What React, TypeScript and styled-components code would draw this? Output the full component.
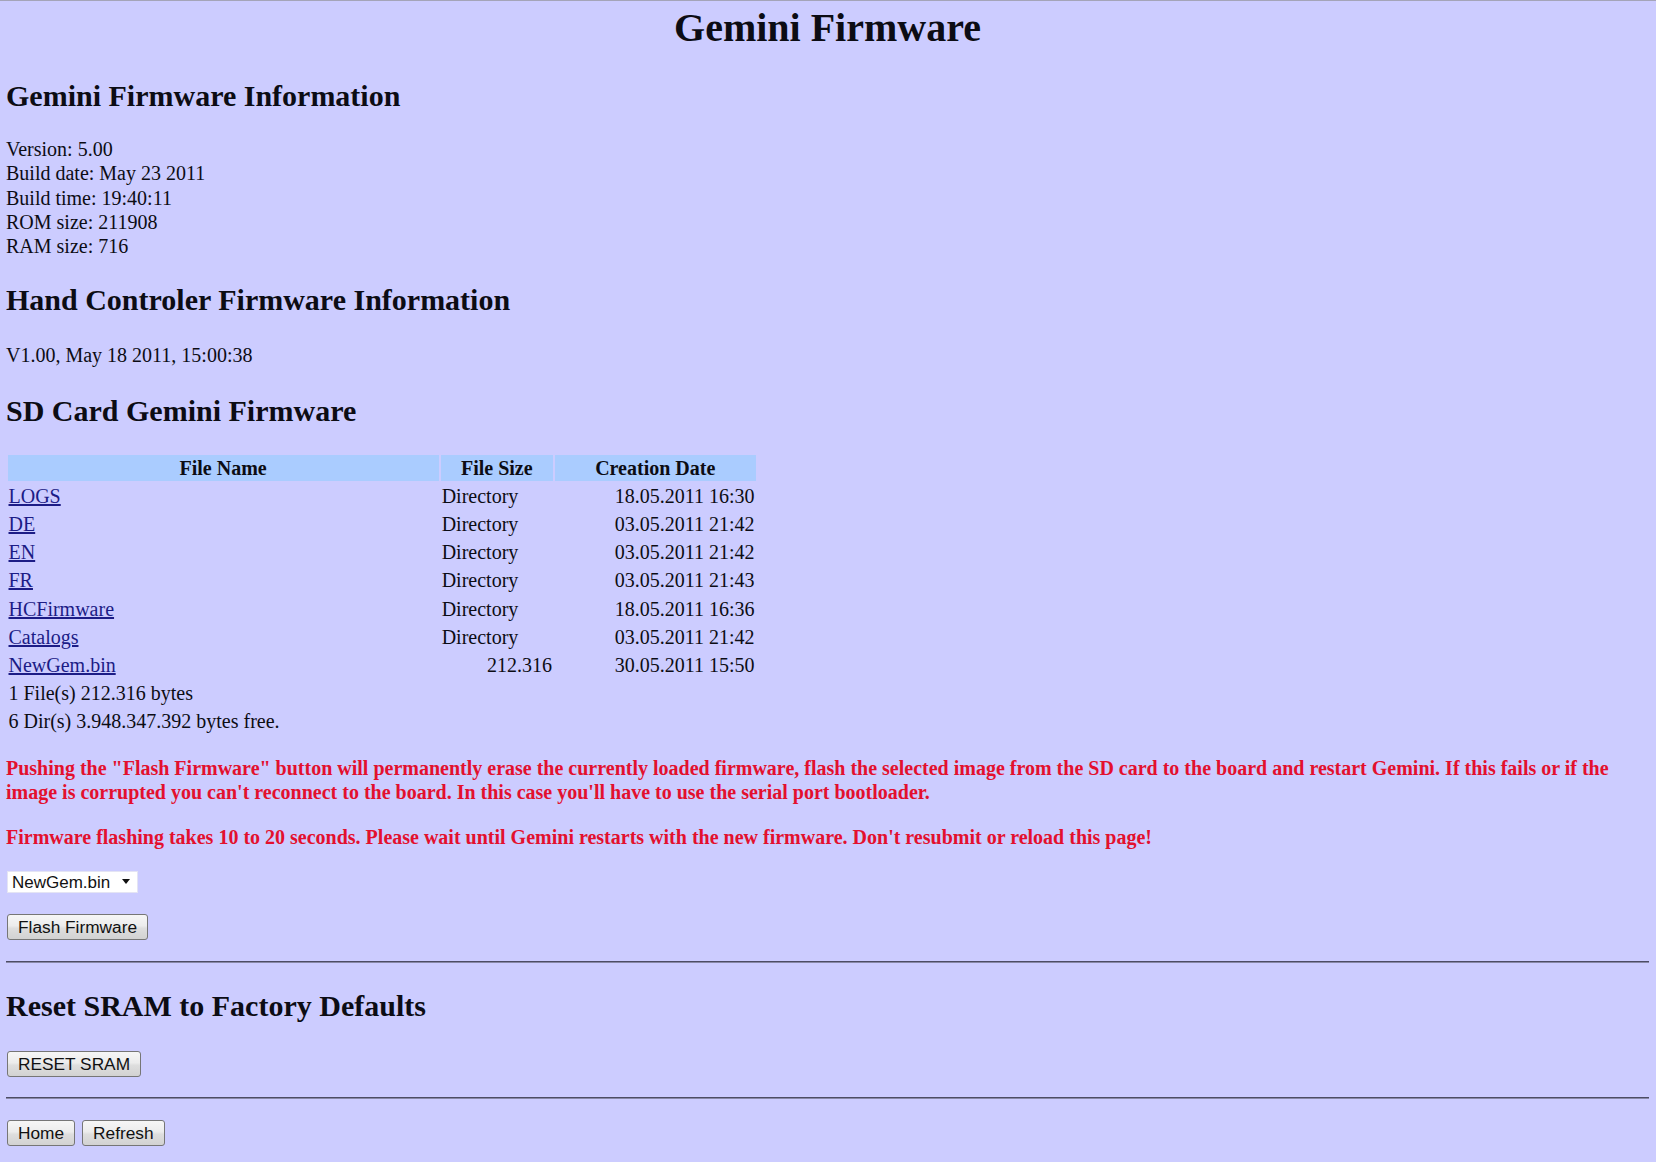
import React from 'react'
import styled, { createGlobalStyle } from 'styled-components'

const GlobalStyle = createGlobalStyle`
  html, body {
    margin: 0;
    padding: 0;
    background: #ccccff;
  }

  body {
    border-top: 1px solid #a4a4b8;
    font-family: "Liberation Serif", "Times New Roman", serif;
    font-size: 20px;
    color: #0c0c14;
  }
`

interface FileRow {
  name: string
  size: string
  date: string
  isDir?: boolean
}

const files: FileRow[] = [
  { name: 'LOGS', size: 'Directory', date: '18.05.2011 16:30', isDir: true },
  { name: 'DE', size: 'Directory', date: '03.05.2011 21:42', isDir: true },
  { name: 'EN', size: 'Directory', date: '03.05.2011 21:42', isDir: true },
  { name: 'FR', size: 'Directory', date: '03.05.2011 21:43', isDir: true },
  { name: 'HCFirmware', size: 'Directory', date: '18.05.2011 16:36', isDir: true },
  { name: 'Catalogs', size: 'Directory', date: '03.05.2011 21:42', isDir: true },
  { name: 'NewGem.bin', size: '212.316', date: '30.05.2011 15:50' },
]

export default function App() {
  return (
    <>
      <GlobalStyle />
      <Page>
        <Title>Gemini Firmware</Title>

        <Heading $top={27}>Gemini Firmware Information</Heading>
        <Lines $top={24}>
          Version: 5.00
          <br />
          Build date: May 23 2011
          <br />
          Build time: 19:40:11
          <br />
          ROM size: 211908
          <br />
          RAM size: 716
        </Lines>

        <Heading $top={24}>Hand Controler Firmware Information</Heading>
        <Lines $top={26}>V1.00, May 18 2011, 15:00:38</Lines>

        <Heading $top={25}>SD Card Gemini Firmware</Heading>
        <FileTable>
          <colgroup>
            <col style={{ width: 430 }} />
            <col style={{ width: 112 }} />
            <col style={{ width: 200 }} />
          </colgroup>
          <thead>
            <tr>
              <HeadCell>File Name</HeadCell>
              <HeadCell>File Size</HeadCell>
              <HeadCell>Creation Date</HeadCell>
            </tr>
          </thead>
          <tbody>
            {files.map((f) => (
              <tr key={f.name}>
                <Cell>
                  <FileLink href="#">{f.name}</FileLink>
                </Cell>
                <Cell $align={f.isDir ? 'left' : 'right'}>{f.size}</Cell>
                <Cell $align="right">{f.date}</Cell>
              </tr>
            ))}
            <tr>
              <Cell colSpan={3}>1 File(s) 212.316 bytes</Cell>
            </tr>
            <tr>
              <Cell colSpan={3}>6 Dir(s) 3.948.347.392 bytes free.</Cell>
            </tr>
          </tbody>
        </FileTable>

        <Warning $top={20}>
          Pushing the "Flash Firmware" button will permanently erase the
          currently loaded firmware, flash the selected image from the SD card
          to the board and restart Gemini. If this fails or if the image is
          corrupted you can't reconnect to the board. In this case you'll have
          to use the serial port bootloader.
        </Warning>
        <Warning $top={21}>
          Firmware flashing takes 10 to 20 seconds. Please wait until Gemini
          restarts with the new firmware. Don't resubmit or reload this page!
        </Warning>

        <FormRow $top={21}>
          <SelectWrap>
            <Select defaultValue="NewGem.bin">
              <option>NewGem.bin</option>
            </Select>
            <SelectArrow />
          </SelectWrap>
        </FormRow>
        <FormRow $top={21}>
          <Button>Flash Firmware</Button>
        </FormRow>

        <Rule $top={21} />

        <Heading $top={25}>Reset SRAM to Factory Defaults</Heading>
        <FormRow $top={28}>
          <Button>RESET SRAM</Button>
        </FormRow>

        <Rule $top={20} />

        <FormRow $top={21}>
          <Button>Home</Button>
          <Button>Refresh</Button>
        </FormRow>
      </Page>
    </>
  )
}

const Page = styled.div`
  display: flex;
  flex-direction: column;
  align-items: stretch;
  padding: 0 7px 0 6px;
`

const Title = styled.h1`
  margin: 4px 0 0;
  font-size: 40px;
  line-height: 46px;
  font-weight: bold;
  text-align: center;
`

const Heading = styled.h2<{ $top: number }>`
  margin: ${(p) => p.$top}px 0 0;
  font-size: 30px;
  line-height: 35px;
  font-weight: bold;
`

const Lines = styled.div<{ $top: number }>`
  margin-top: ${(p) => p.$top}px;
  line-height: 24.3px;
`

const FileTable = styled.table`
  margin-top: 25.5px;
  margin-left: -0.5px;
  width: 752px;
  border-collapse: separate;
  border-spacing: 2.5px;
  table-layout: fixed;
`

const HeadCell = styled.th`
  padding: 1px;
  line-height: 24.05px;
  font-weight: bold;
  text-align: center;
  background: #aaccff;
`

const Cell = styled.td<{ $align?: 'left' | 'right' }>`
  padding: 1px;
  line-height: 24.05px;
  text-align: ${(p) => p.$align || 'left'};
  white-space: nowrap;
`

const FileLink = styled.a`
  color: #1c1c86;
  text-decoration: underline;
`

const Warning = styled.p<{ $top: number }>`
  margin: ${(p) => p.$top}px 0 0;
  line-height: 24px;
  font-weight: bold;
  color: #e3102e;
`

const FormRow = styled.div<{ $top: number }>`
  display: flex;
  gap: 6px;
  margin-top: ${(p) => p.$top}px;
`

const SelectWrap = styled.span`
  position: relative;
  display: inline-block;
`

const Select = styled.select`
  appearance: none;
  -webkit-appearance: none;
  width: 131px;
  height: 22px;
  margin: 0 0 0 1px;
  padding: 0 20px 0 4px;
  border: 1px solid #e4e4f4;
  border-radius: 0;
  background: #ffffff;
  font-family: "Liberation Sans", Arial, sans-serif;
  font-size: 17px;
  color: #111;
`

const SelectArrow = styled.span`
  position: absolute;
  top: 9px;
  right: 8px;
  width: 0;
  height: 0;
  border-left: 4px solid transparent;
  border-right: 4px solid transparent;
  border-top: 5px solid #111;
  pointer-events: none;
`

const Button = styled.button`
  height: 26px;
  margin: 0 0 0 1px;
  padding: 0 10px;
  border: 1px solid #767676;
  border-radius: 3px;
  background: linear-gradient(
    #f6f6f6 0%,
    #ececec 45%,
    #dedede 55%,
    #d2d2d2 100%
  );
  font-family: "Liberation Sans", Arial, sans-serif;
  font-size: 17.3px;
  color: #111;
  cursor: pointer;
`

const Rule = styled.hr<{ $top: number }>`
  width: 100%;
  height: 0;
  margin: ${(p) => p.$top}px 0 0;
  border: 0;
  border-top: 1px solid #4c4c64;
  border-bottom: 1px solid #8888a8;
`
